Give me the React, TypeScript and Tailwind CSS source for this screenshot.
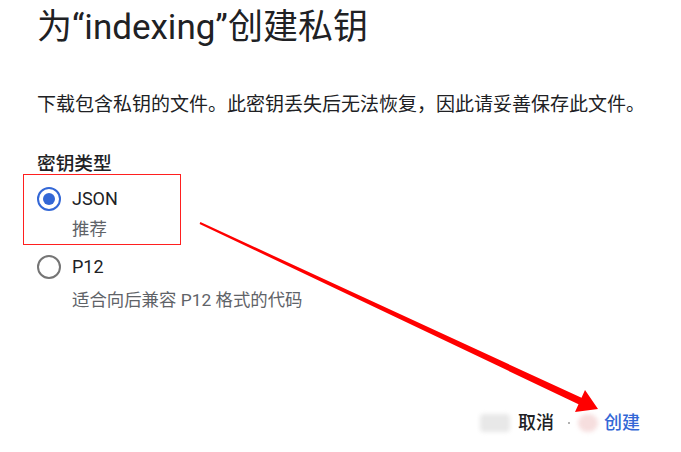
import React from "react";

const font = { fontFamily: 'Roboto, "Noto Sans CJK SC", sans-serif' };

function Radio({ checked }: { checked: boolean }) {
  return checked ? (
    <span className="flex h-[24px] w-[24px] items-center justify-center rounded-full border-[2.5px] border-[#3367d6]">
      <span className="h-[12px] w-[12px] rounded-full bg-[#3367d6]" />
    </span>
  ) : (
    <span className="h-[24px] w-[24px] rounded-full border-[2.5px] border-[#757575]" />
  );
}

export default function App() {
  return (
    <div className="relative h-[452px] w-[681px] overflow-hidden bg-white" style={font}>
      <div className="flex h-full flex-col pl-[37px]">
        <h1
          className="mt-[8px] text-[35px] leading-[40px] text-[#202124]"
          style={{ fontFamily: 'Roboto, "Noto Sans CJK SC", sans-serif', fontWeight: 400 }}
        >
          为“indexing”创建私钥
        </h1>
        <p className="mt-[43px] text-[19px] leading-[28px] text-[#202124]">
          下载包含私钥的文件。此密钥丢失后无法恢复，因此请妥善保存此文件。
        </p>
        <div className="mt-[31px] text-[18.7px] font-medium leading-[28px] text-[#202124]">密钥类型</div>
        <div className="mt-[8px] flex flex-col">
          <label className="flex items-center gap-[11px]">
            <Radio checked />
            <span className="text-[18px] leading-[26px] text-[#202124]">JSON</span>
          </label>
          <div className="mt-[5px] pl-[35px] text-[17.4px] leading-[24px] text-[#5f6368]">推荐</div>
          <label className="mt-[13px] flex items-center gap-[11px]">
            <Radio checked={false} />
            <span className="text-[18px] leading-[26px] text-[#202124]">P12</span>
          </label>
          <div className="mt-[8px] pl-[35px] text-[17.4px] leading-[24px] text-[#5f6368]">
            适合向后兼容 P12 格式的代码
          </div>
        </div>
        <div className="mt-auto mb-[16px] flex items-center justify-end gap-[50px] pr-[41px]">
          <button className="text-[18px] leading-[26px] font-medium text-[#202124]">取消</button>
          <button className="text-[18px] leading-[26px] font-medium text-[#3367d6]">创建</button>
        </div>
      </div>

      {/* annotation: red box */}
      <div className="pointer-events-none absolute left-[23px] top-[174px] h-[71px] w-[158px] border-[1.5px] border-[#ff1f1f]" />

      {/* watermark blobs */}
      <div className="pointer-events-none absolute left-[480px] top-[414px] h-[18px] w-[30px] rounded-sm bg-[#e8e8e8] blur-[2px]" />
      <div className="pointer-events-none absolute left-[578px] top-[414px] h-[18px] w-[20px] rounded-full bg-[#f6dede] blur-[2px]" />
      <div className="pointer-events-none absolute left-[568px] top-[422px] h-[2px] w-[2px] rounded-full bg-[#999]" />

      {/* annotation: arrow */}
      <svg className="pointer-events-none absolute left-0 top-0" width="681" height="452" viewBox="0 0 681 452">
        <polygon
          points="200.4,222.1 581.5,397.8 585,390 598,409 575,412 578.5,404.2 199.6,223.9"
          fill="#ff0000"
        />
      </svg>
    </div>
  );
}
